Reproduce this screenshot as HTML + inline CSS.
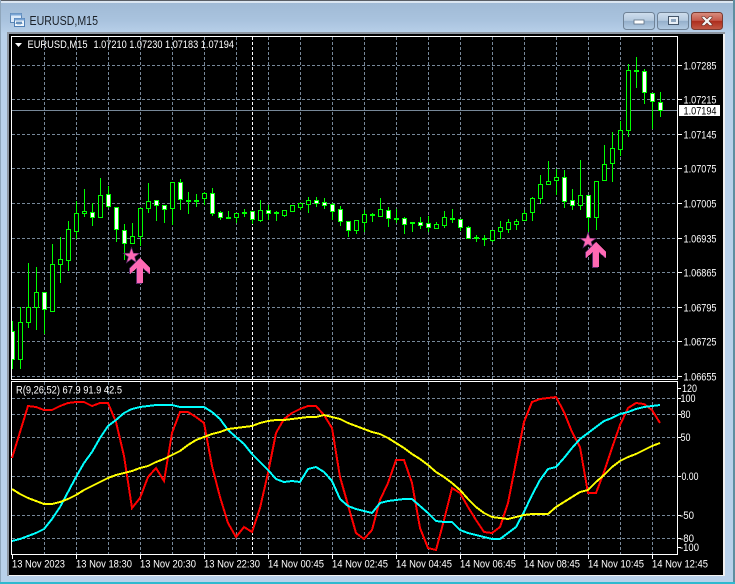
<!DOCTYPE html>
<html><head><meta charset="utf-8"><title>EURUSD,M15</title>
<style>
html,body{margin:0;padding:0;background:#b9d1ea}
body{width:735px;height:584px;overflow:hidden;position:relative;font-family:"Liberation Sans",sans-serif}
svg{position:absolute;left:0;top:0}
text{font-family:"Liberation Sans",sans-serif;font-size:11px;fill:#fff}
</style></head><body>
<svg width="735" height="584" viewBox="0 0 735 584" xmlns="http://www.w3.org/2000/svg">
<defs>
<linearGradient id="tb" x1="0" y1="0" x2="0" y2="1"><stop offset="0" stop-color="#9fb9d4"/><stop offset=".6" stop-color="#a9c3de"/><stop offset="1" stop-color="#b9d1ea"/></linearGradient>
<linearGradient id="btn" x1="0" y1="0" x2="0" y2="1"><stop offset="0" stop-color="#cfdeed"/><stop offset=".48" stop-color="#b4c9de"/><stop offset=".5" stop-color="#94afcb"/><stop offset="1" stop-color="#b5cde4"/></linearGradient>
<linearGradient id="cls" x1="0" y1="0" x2="0" y2="1"><stop offset="0" stop-color="#d98f80"/><stop offset=".48" stop-color="#c4584a"/><stop offset=".5" stop-color="#ad2c1c"/><stop offset="1" stop-color="#c25a46"/></linearGradient>
<clipPath id="cm"><rect x="12" y="37" width="665" height="342"/></clipPath>
</defs>
<rect width="735" height="584" fill="#b9d1ea"/>
<rect width="735" height="34" fill="url(#tb)"/>
<rect x="0" y="0" width="735" height="1" fill="#5a5f66"/>
<rect x="0" y="1" width="735" height="2" fill="#dbe6f1"/>
<rect x="0" y="0" width="1" height="584" fill="#8fa6bb"/>
<rect x="733" y="0" width="2" height="584" fill="#5f8ea0"/>
<rect x="0" y="582" width="735" height="2" fill="#2fb9cf"/>
<rect x="7" y="32" width="718" height="544" fill="#8d96a1"/>
<rect x="9" y="34" width="714" height="541" fill="#000"/>
<rect x="9" y="575" width="716" height="1" fill="#f4f4f4"/>
<rect x="723" y="34" width="2" height="542" fill="#f0f0f0"/>

<!-- window icon -->
<g shape-rendering="crispEdges">
<rect x="10.5" y="13.5" width="11" height="9" fill="#dbeafa" stroke="#5b86b5"/>
<rect x="10.5" y="13.5" width="11" height="2" fill="#7aa5d5"/>
<rect x="14.5" y="18.5" width="10" height="8" fill="#eef5fc" stroke="#4f7fb5"/>
<rect x="14.5" y="18.5" width="10" height="2" fill="#7aa5d5"/>
<path d="M16 24l1-2 1 2 1-2 1 2 1-2 1 2" fill="none" stroke="#3a70a8"/>
</g>
<text x="29.5" y="25" textLength="68.5" lengthAdjust="spacingAndGlyphs" style="font-size:13px;fill:#1b2128">EURUSD,M15</text>

<!-- window buttons -->
<rect x="623.5" y="12.5" width="31" height="17" rx="3" fill="url(#btn)" stroke="#6f8296"/>
<rect x="634" y="20" width="10" height="4" fill="#fff" stroke="#5c6f82" stroke-width=".8"/>
<rect x="657.5" y="12.5" width="31" height="17" rx="3" fill="url(#btn)" stroke="#6f8296"/>
<rect x="668.5" y="16.5" width="10" height="8" fill="#e8eff6" stroke="#44566a"/>
<rect x="671" y="19" width="5" height="3" fill="#8ea6bf"/>
<rect x="691.5" y="12.5" width="31" height="17" rx="3" fill="url(#cls)" stroke="#7a3a30"/>
<path d="M702 16.5l2.5 0 2.5 2.5 2.5-2.5 2.5 0 0 1.5-3 3 3 3 0 1.5-2.5 0-2.5-2.5-2.5 2.5-2.5 0 0-1.5 3-3-3-3z" fill="#f5f5f5" stroke="#5d2a22" stroke-width=".6"/>

<g shape-rendering="crispEdges">
<!-- grid -->
<path fill="none" stroke="#778899" stroke-dasharray="3 2" d="M12 65.5H677M12 99.5H677M12 134.5H677M12 168.5H677M12 203.5H677M12 238.5H677M12 272.5H677M12 307.5H677M12 341.5H677M12 376.5H677M12 398.5H677M12 414.5H677M12 437.5H677M12 476.5H677M12 515.5H677M12 538.5H677
M44.5 37V379M76.5 37V379M108.5 37V379M140.5 37V379M172.5 37V379M204.5 37V379M236.5 37V379M268.5 37V379M300.5 37V379M332.5 37V379M364.5 37V379M396.5 37V379M428.5 37V379M460.5 37V379M492.5 37V379M524.5 37V379M556.5 37V379M588.5 37V379M620.5 37V379M652.5 37V379
M44.5 382V554M76.5 382V554M108.5 382V554M140.5 382V554M172.5 382V554M204.5 382V554M236.5 382V554M268.5 382V554M300.5 382V554M332.5 382V554M364.5 382V554M396.5 382V554M428.5 382V554M460.5 382V554M492.5 382V554M524.5 382V554M556.5 382V554M588.5 382V554M620.5 382V554M652.5 382V554"/>
<path fill="none" stroke="#fff" stroke-dasharray="3 2" d="M252.5 37V379M252.5 382V554"/>
<path fill="none" stroke="#778899" d="M12 110.5H677"/>

<g clip-path="url(#cm)">
<!-- wicks -->
<path fill="none" stroke="#00ff00" d="M12.5 321V369M20.5 307V369M28.5 263V328M36.5 267V330M44.5 292V334M52.5 244V312M60.5 237V283M68.5 221V271M76.5 201V239M84.5 189V217M92.5 203V226M100.5 178V218M108.5 186V208M116.5 207V242M124.5 224V260M132.5 223V244M140.5 208V246M148.5 183V213M156.5 200V221M164.5 205V223M172.5 182V225M180.5 179V210M188.5 192V214M196.5 194V207M204.5 192V205M212.5 188V216M220.5 211V220M228.5 211V219M236.5 213V223M244.5 209V217M252.5 211V224M260.5 200V222M268.5 205V220M276.5 211V221M284.5 210V217M292.5 205V212M300.5 203V210M308.5 197V213M316.5 197V207M324.5 198V209M332.5 203V220M340.5 206V226M348.5 221V237M356.5 220V234M364.5 210V232M372.5 213V222M380.5 198V217M388.5 207V227M396.5 209V223M404.5 217V234M412.5 222V232M420.5 217V229M428.5 216V232M436.5 222V229M444.5 211V228M452.5 209V223M460.5 219V231M468.5 226V239M476.5 235V242M484.5 235V246M492.5 230V242M500.5 221V239M508.5 219V233M516.5 219V230M524.5 210V221M532.5 197V221M540.5 175V204M548.5 161V185M556.5 169V195M564.5 170V208M572.5 189V210M580.5 160V210M588.5 195V232M596.5 181V230M604.5 145V181M612.5 132V182M620.5 121V156M628.5 64V137M636.5 57V88M644.5 69V104M652.5 93V129M660.5 92V117"/>
<!-- flat bodies -->
<path fill="#00ff00" d="M186 200h5v2h-5zM194 200h5v2h-5zM226 217h5v2h-5zM242 212h5v2h-5zM274 212h5v2h-5zM370 214h5v2h-5zM394 218h5v2h-5zM410 222h5v2h-5zM450 218h5v2h-5zM474 237h5v2h-5zM482 238h5v2h-5zM634 70h5v2h-5z"/>
<!-- hollow bodies -->
<path fill="#000" stroke="#00ff00" d="M18.5 322.5h4V359.5h-4zM26.5 307.5h4V322.5h-4zM34.5 292.5h4V307.5h-4zM50.5 264.5h4V311.5h-4zM58.5 259.5h4V264.5h-4zM66.5 229.5h4V260.5h-4zM74.5 213.5h4V231.5h-4zM82.5 211.5h4V213.5h-4zM98.5 195.5h4V217.5h-4zM130.5 236.5h4V243.5h-4zM138.5 208.5h4V236.5h-4zM146.5 201.5h4V208.5h-4zM170.5 182.5h4V208.5h-4zM202.5 193.5h4V198.5h-4zM234.5 213.5h4V217.5h-4zM258.5 210.5h4V220.5h-4zM282.5 210.5h4V215.5h-4zM290.5 205.5h4V211.5h-4zM298.5 203.5h4V207.5h-4zM306.5 200.5h4V204.5h-4zM354.5 220.5h4V230.5h-4zM362.5 214.5h4V222.5h-4zM378.5 209.5h4V216.5h-4zM434.5 224.5h4V228.5h-4zM442.5 217.5h4V225.5h-4zM490.5 230.5h4V240.5h-4zM498.5 227.5h4V231.5h-4zM506.5 222.5h4V229.5h-4zM514.5 221.5h4V224.5h-4zM522.5 213.5h4V220.5h-4zM530.5 198.5h4V212.5h-4zM538.5 184.5h4V198.5h-4zM546.5 181.5h4V184.5h-4zM554.5 177.5h4V180.5h-4zM578.5 195.5h4V205.5h-4zM594.5 181.5h4V217.5h-4zM602.5 164.5h4V180.5h-4zM610.5 148.5h4V163.5h-4zM618.5 130.5h4V149.5h-4zM626.5 70.5h4V130.5h-4z"/>
<!-- white bodies -->
<path fill="#fff" stroke="#00ff00" d="M10.5 331.5h4V359.5h-4zM42.5 292.5h4V309.5h-4zM90.5 212.5h4V217.5h-4zM106.5 194.5h4V206.5h-4zM114.5 207.5h4V229.5h-4zM122.5 230.5h4V243.5h-4zM154.5 200.5h4V205.5h-4zM162.5 205.5h4V209.5h-4zM178.5 182.5h4V199.5h-4zM210.5 193.5h4V213.5h-4zM218.5 212.5h4V217.5h-4zM250.5 211.5h4V219.5h-4zM266.5 210.5h4V213.5h-4zM314.5 200.5h4V203.5h-4zM322.5 202.5h4V205.5h-4zM330.5 204.5h4V211.5h-4zM338.5 209.5h4V221.5h-4zM346.5 221.5h4V230.5h-4zM386.5 210.5h4V218.5h-4zM402.5 218.5h4V224.5h-4zM418.5 222.5h4V225.5h-4zM426.5 223.5h4V227.5h-4zM458.5 219.5h4V227.5h-4zM466.5 227.5h4V238.5h-4zM562.5 177.5h4V201.5h-4zM570.5 200.5h4V205.5h-4zM586.5 195.5h4V217.5h-4zM642.5 71.5h4V92.5h-4zM650.5 93.5h4V101.5h-4zM658.5 102.5h4V110.5h-4z"/>
</g>

<!-- frames -->
<path fill="none" stroke="#fff" d="M11.5 36.5H677.5V379.5H11.5ZM11.5 381.5H677.5V554.5H11.5Z"/>
<!-- axis ticks -->
<path fill="none" stroke="#fff" d="M678 65.5h4M678 99.5h4M678 134.5h4M678 168.5h4M678 203.5h4M678 238.5h4M678 272.5h4M678 307.5h4M678 341.5h4M678 376.5h4M678 388.5h3M678 398.5h3M678 414.5h3M678 437.5h3M678 476.5h3M678 515.5h3M678 538.5h3M678 547.5h3M12.5 555v4M76.5 555v4M140.5 555v4M204.5 555v4M268.5 555v4M332.5 555v4M396.5 555v4M460.5 555v4M524.5 555v4M588.5 555v4M652.5 555v4"/>

<!-- indicator lines -->
<polyline fill="none" stroke="#ff0000" stroke-width="2" points="12,458 20,432 28,406 36,407 44,410 52,410 60,406 68,403 76,402 84,402 92,406 100,403 108,403 116,422 124,456 132,508 140,498 148,477 156,468 164,481 172,433 180,412 188,412 196,417 204,423 212,466 220,497 228,523 236,537 244,527 252,532 260,508 268,473 276,433 284,419 292,413 300,409 308,406 316,406 324,415 332,428 340,477 348,505 356,533 364,539 372,530 380,500 388,483 396,460 404,460 412,483 420,528 428,548 436,550 444,520 452,488 460,493 468,507 476,520 484,532 492,533 500,527 508,503 516,462 524,422 532,402 540,399 548,398 556,397 564,412 572,432 580,447 588,493 596,493 604,472 612,448 620,425 628,408 636,403 644,404 652,410 660,423"/>
<polyline fill="none" stroke="#00ffff" stroke-width="2" points="12,541 20,539 28,536 36,533 44,529 52,519 60,507 68,492 76,477 84,463 92,452 100,438 108,426 116,420 124,413 132,409 140,407 148,406 156,405 164,405 172,405 180,407 188,407 196,407 204,407 212,412 220,419 228,430 236,437 244,444 252,454 260,462 268,470 276,479 284,482 292,481 300,482 308,469 316,467 324,472 332,481 340,499 348,506 356,509 364,511 372,513 380,503 388,501 396,500 404,499 412,499 420,506 428,513 436,521 444,522 452,522 460,530 468,533 476,535 484,537 492,539 500,539 508,533 516,527 524,512 532,495 540,480 548,469 556,467 564,458 572,448 580,439 588,433 596,427 604,421 612,418 620,414 628,412 636,409 644,407 652,406 660,405"/>
<polyline fill="none" stroke="#ffff00" stroke-width="2" points="12,489 20,494 28,498 36,501 44,504 52,504 60,502 68,499 76,495 84,490 92,486 100,482 108,478 116,475 124,473 132,471 140,468 148,466 156,462 164,459 172,455 180,451 188,445 196,440 204,437 212,434 220,432 228,429 236,428 244,427 252,426 260,423 268,421 276,420 284,420 292,419 300,418 308,417 316,417 324,415 332,417 340,419 348,423 356,426 364,429 372,432 380,434 388,438 396,443 404,448 412,454 420,459 428,465 436,472 444,477 452,483 460,490 468,499 476,507 484,513 492,517 500,518 508,519 516,517 524,515 532,514 540,514 548,514 556,507 564,502 572,497 580,492 588,490 596,482 604,475 612,467 620,461 628,457 636,454 644,450 652,446 660,443"/>
</g>

<!-- signal markers -->
<g>
<path d="M131.5 247.5l2 5.7 6 .1-4.8 3.6 1.8 5.8-5-3.5-5 3.5 1.8-5.8-4.8-3.6 6-.1z" fill="#ff69b4" stroke="#5a2a6a" stroke-width=".7"/>
<path d="M588 232.5l2 5.7 6 .1-4.8 3.6 1.8 5.8-5-3.5-5 3.5 1.8-5.8-4.8-3.6 6-.1z" fill="#ff69b4" stroke="#5a2a6a" stroke-width=".7"/>
<g shape-rendering="crispEdges">
<path d="M139 258L149 268V274L142 268V284H136V268L129 274V268Z" fill="#5a2a6a"/>
<path d="M140 258L150 268V274L143 268V283H137V268L130 274V268Z" fill="#ff69b4"/>
<path d="M595 242L605 252V258L598 252V268H592V252L585 258V252Z" fill="#5a2a6a"/>
<path d="M596 242L606 252V258L599 252V267H593V252L586 258V252Z" fill="#ff69b4"/>
</g>
</g>

<!-- header -->
<path d="M15 43h7l-3.5 4z" fill="#fff"/>
<text x="27.5" y="48" textLength="60" lengthAdjust="spacingAndGlyphs">EURUSD,M15</text>
<text x="93.5" y="48" textLength="140.5" lengthAdjust="spacingAndGlyphs">1.07210 1.07230 1.07183 1.07194</text>
<text x="16" y="393.5" textLength="106" lengthAdjust="spacingAndGlyphs">R(9,26,52) 67.9 91.9 42.5</text>

<!-- price axis -->
<text x="683.5" y="69.5" textLength="33" lengthAdjust="spacingAndGlyphs">1.07285</text>
<text x="683.5" y="103.5" textLength="33" lengthAdjust="spacingAndGlyphs">1.07215</text>
<rect x="679" y="105" width="41" height="11" fill="#fff"/>
<text x="683.5" y="114.5" textLength="33" lengthAdjust="spacingAndGlyphs" style="fill:#000">1.07194</text>
<text x="683.5" y="138.5" textLength="33" lengthAdjust="spacingAndGlyphs">1.07145</text>
<text x="683.5" y="172.5" textLength="33" lengthAdjust="spacingAndGlyphs">1.07075</text>
<text x="683.5" y="207.5" textLength="33" lengthAdjust="spacingAndGlyphs">1.07005</text>
<text x="683.5" y="242.5" textLength="33" lengthAdjust="spacingAndGlyphs">1.06935</text>
<text x="683.5" y="276.5" textLength="33" lengthAdjust="spacingAndGlyphs">1.06865</text>
<text x="683.5" y="311.5" textLength="33" lengthAdjust="spacingAndGlyphs">1.06795</text>
<text x="683.5" y="345.5" textLength="33" lengthAdjust="spacingAndGlyphs">1.06725</text>
<text x="683.5" y="380.5" textLength="33" lengthAdjust="spacingAndGlyphs">1.06655</text>

<!-- indicator axis -->
<text x="682" y="392" textLength="15" lengthAdjust="spacingAndGlyphs">120</text>
<text x="680.5" y="402" textLength="15" lengthAdjust="spacingAndGlyphs">100</text>
<text x="680.5" y="418" textLength="10" lengthAdjust="spacingAndGlyphs">80</text>
<text x="680.5" y="441" textLength="10" lengthAdjust="spacingAndGlyphs">50</text>
<text x="681.5" y="480" textLength="17" lengthAdjust="spacingAndGlyphs">0.00</text>
<text x="680" y="519" textLength="14" lengthAdjust="spacingAndGlyphs">-50</text>
<text x="680" y="542" textLength="14" lengthAdjust="spacingAndGlyphs">-80</text>
<text x="680" y="551" textLength="19" lengthAdjust="spacingAndGlyphs">-100</text>

<!-- time axis -->
<text x="12" y="567.5" textLength="53" lengthAdjust="spacingAndGlyphs">13 Nov 2023</text>
<text x="76" y="567.5" textLength="56" lengthAdjust="spacingAndGlyphs">13 Nov 18:30</text>
<text x="140" y="567.5" textLength="56" lengthAdjust="spacingAndGlyphs">13 Nov 20:30</text>
<text x="204" y="567.5" textLength="56" lengthAdjust="spacingAndGlyphs">13 Nov 22:30</text>
<text x="268" y="567.5" textLength="56" lengthAdjust="spacingAndGlyphs">14 Nov 00:45</text>
<text x="332" y="567.5" textLength="56" lengthAdjust="spacingAndGlyphs">14 Nov 02:45</text>
<text x="396" y="567.5" textLength="56" lengthAdjust="spacingAndGlyphs">14 Nov 04:45</text>
<text x="460" y="567.5" textLength="56" lengthAdjust="spacingAndGlyphs">14 Nov 06:45</text>
<text x="524" y="567.5" textLength="56" lengthAdjust="spacingAndGlyphs">14 Nov 08:45</text>
<text x="588" y="567.5" textLength="56" lengthAdjust="spacingAndGlyphs">14 Nov 10:45</text>
<text x="652" y="567.5" textLength="56" lengthAdjust="spacingAndGlyphs">14 Nov 12:45</text>
</svg>
</body></html>
